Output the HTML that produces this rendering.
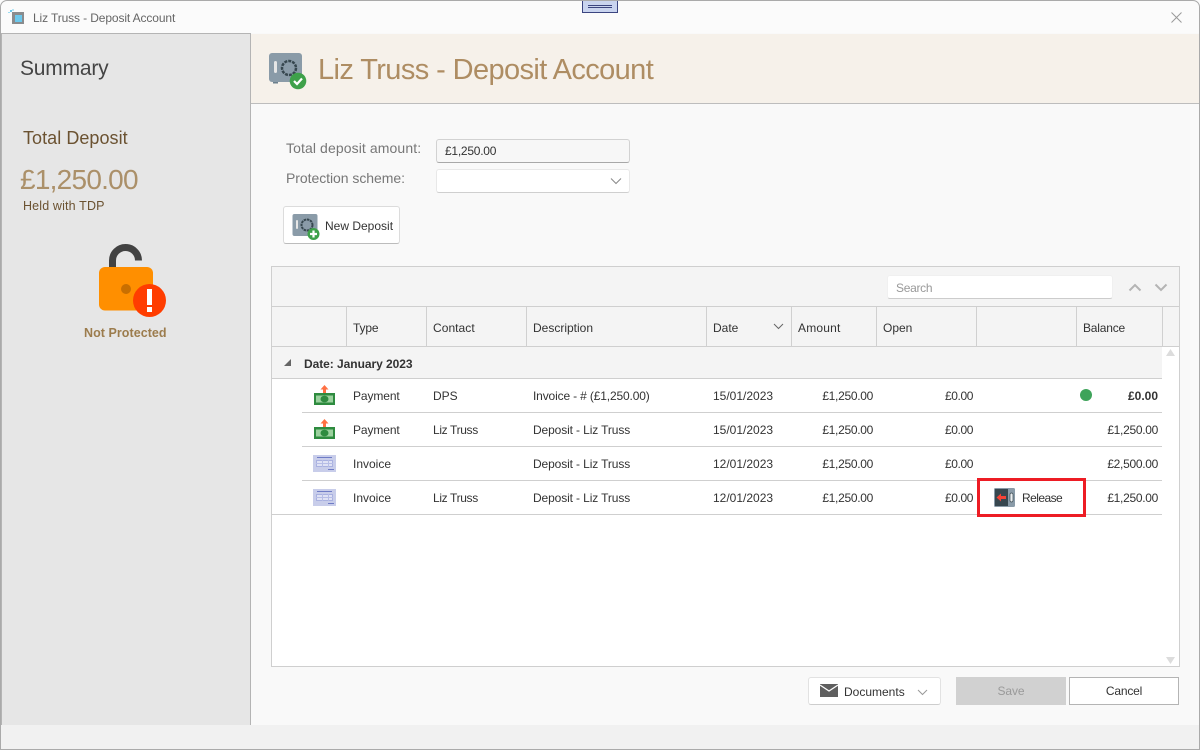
<!DOCTYPE html>
<html><head><meta charset="utf-8">
<style>
html,body{margin:0;padding:0;background:#fff}
#w{position:relative;width:1200px;height:750px;overflow:hidden;background:#f9f9f9;font-family:"Liberation Sans",sans-serif;font-size:12px;color:#333}
#w div{position:absolute;white-space:nowrap;box-sizing:border-box}
.t{line-height:16px;height:16px}
.r{text-align:right}
.m{letter-spacing:-.3px}
.z{letter-spacing:-.4px}
.l{letter-spacing:-.35px}
.d{letter-spacing:-.12px}
.hl{background:#cfcfcf;height:1px}
.vl{background:#d0d0d0;width:1px;top:307px;height:40px}
</style></head><body>
<div id="w">
<!-- frame -->
<div style="left:0;top:0;width:1200px;height:750px;border:1px solid #aaa;border-radius:7px 7px 0 0;z-index:9;pointer-events:none"></div>
<div style="left:0;top:0;width:1200px;height:33px;background:#fbfbfb"></div>
<svg style="position:absolute;left:8px;top:9px" width="18" height="17" viewBox="0 0 18 17"><rect x="4" y="3" width="12" height="12" fill="#8a8c8e"/><rect x="7" y="6" width="7" height="7" fill="#6cc8ec"/><rect x="2" y="1" width="2" height="2" fill="#6cc8ec"/><rect x="0" y="3" width="2" height="1" fill="#9adcf2"/><rect x="4" y="0" width="2" height="2" fill="#b5e5f5"/></svg>
<div class="t" style="left:33px;top:10px;font-size:12px;color:#666;letter-spacing:-.12px">Liz Truss - Deposit Account</div>
<div style="left:582px;top:0;width:36px;height:13px;background:#c9d4ef;border:1px solid #3b4580;border-top:none"></div>
<div style="left:588px;top:5px;width:24px;height:1px;background:#3b4580"></div>
<div style="left:588px;top:7px;width:24px;height:1px;background:#3b4580"></div>
<svg style="position:absolute;left:1171px;top:12px" width="11" height="11" viewBox="0 0 11 11"><path d="M.5 .5L10.500 10.500M10.500 .5L.5 10.500" stroke="#999" stroke-width="1" fill="none"/></svg>

<!-- sidebar -->
<div style="left:1px;top:33px;width:250px;height:692px;background:#e6e6e6;border-left:1px solid #b4b4b4;border-top:1px solid #b4b4b4;border-right:1px solid #b4b4b4"></div>
<div style="left:20px;top:55px;font-size:21px;line-height:27px;color:#444;letter-spacing:-.2px">Summary</div>
<div style="left:23px;top:127px;font-size:18px;line-height:22px;color:#6b5231;letter-spacing:.05px">Total Deposit</div>
<div style="left:20px;top:162px;font-size:28px;line-height:36px;color:#ab9069;letter-spacing:-.75px">£1,250.00</div>
<div class="t" style="left:23px;top:198px;font-size:12.500px;color:#6b5231;letter-spacing:.15px">Held with TDP</div>
<svg style="position:absolute;left:95px;top:240px" width="75" height="80" viewBox="0 0 75 80">
<path d="M17.500 28V20.500A13 13 0 0 1 43.500 20.500" fill="none" stroke="#424242" stroke-width="7"/>
<rect x="4" y="27" width="54" height="43.500" rx="6" fill="#ff8f00"/>
<circle cx="31" cy="49" r="5" fill="#c96f00"/>
<circle cx="54.500" cy="60.500" r="16.500" fill="#ff3d00"/>
<rect x="52" y="49" width="5" height="16" fill="#fff"/><rect x="52" y="67" width="5" height="5" fill="#fff"/>
</svg>
<div class="t" style="left:84px;top:325px;font-size:12.500px;font-weight:bold;color:#9c7c4d;letter-spacing:.05px">Not Protected</div>

<!-- header -->
<div style="left:251px;top:34px;width:948px;height:70px;background:#f6f1ea;border-bottom:1px solid #bdbdbd"></div>
<svg style="position:absolute;left:268px;top:52px" width="40" height="38" viewBox="0 0 40 38">
<rect x="1" y="1" width="33" height="29" rx="3" fill="#8a9ba8"/>
<rect x="5" y="30" width="5" height="1.500" fill="#6b7f8c"/>
<rect x="6" y="9" width="3" height="12" rx="1.500" fill="#e6e6e6"/>
<circle cx="21" cy="16" r="7" fill="none" stroke="#37474f" stroke-width="2.500" stroke-dasharray="3 1"/>
<circle cx="30" cy="29" r="8.300" fill="#3ea14a"/>
<path d="M26 29l3 3 5-5.500" fill="none" stroke="#fff" stroke-width="2.200"/>
</svg>
<div style="left:318px;top:51px;font-size:29px;line-height:38px;color:#ae8d63;letter-spacing:-.6px">Liz Truss - Deposit Account</div>

<!-- form -->
<div class="t" style="left:286px;top:140px;font-size:14px;color:#777;letter-spacing:.1px">Total deposit amount:</div>
<div class="t" style="left:286px;top:170px;font-size:14px;color:#777;letter-spacing:-.05px">Protection scheme:</div>
<div class="t" style="left:436px;top:139px;width:194px;height:24px;background:#f7f7f7;border:1px solid #d2d2d2;border-bottom:1px solid #a8a8a8;border-radius:3px;padding:4px 8px;font-size:12px;line-height:15px;color:#333;letter-spacing:-.25px">£1,250.00</div>
<div style="left:436px;top:169px;width:194px;height:24px;background:#fff;border:1px solid #e8e8e8;border-bottom:1px solid #cfcfcf;border-radius:3px"></div>
<svg style="position:absolute;left:610px;top:177px" width="12" height="8"><path d="M1 1.500L6 6.500L11 1.500" fill="none" stroke="#888" stroke-width="1"/></svg>
<div style="left:283px;top:206px;width:117px;height:38px;background:#fff;border:1px solid #dcdcdc;border-bottom:1px solid #bcbcbc;border-radius:3px"></div>
<svg style="position:absolute;left:291px;top:212px" width="30" height="29" viewBox="0 0 30 29">
<rect x="1.500" y="2" width="25" height="22" rx="2" fill="#8a9ba8"/>
<rect x="5" y="8" width="2" height="9" rx="1" fill="#e6e6e6"/>
<circle cx="16" cy="13" r="5.500" fill="none" stroke="#37474f" stroke-width="2" stroke-dasharray="2.500 .7"/>
<circle cx="22.500" cy="22" r="6" fill="#3ea14a"/>
<path d="M22.500 18.500v7M19 22h7" stroke="#fff" stroke-width="2.200"/>
</svg>
<div class="t" style="left:325px;top:218px;font-size:12px;color:#333">New Deposit</div>

<!-- grid -->
<div style="left:271px;top:266px;width:909px;height:401px;background:#fff;border:1px solid #cfcfcf"></div>
<div style="left:272px;top:267px;width:907px;height:112px;background:#f4f4f4"></div>
<div style="left:1162px;top:347px;width:17px;height:319px;background:#fff"></div>
<div class="hl" style="left:272px;top:306px;width:907px"></div>
<div class="hl" style="left:272px;top:346px;width:907px"></div>
<div class="hl" style="left:272px;top:378px;width:890px"></div>
<div class="hl" style="left:302px;top:412px;width:860px"></div>
<div class="hl" style="left:302px;top:446px;width:860px"></div>
<div class="hl" style="left:302px;top:480px;width:860px"></div>
<div class="hl" style="left:272px;top:514px;width:890px"></div>
<div class="vl" style="left:346px"></div><div class="vl" style="left:426px"></div><div class="vl" style="left:526px"></div><div class="vl" style="left:706px"></div><div class="vl" style="left:791px"></div><div class="vl" style="left:876px"></div><div class="vl" style="left:976px"></div><div class="vl" style="left:1076px"></div><div class="vl" style="left:1162px"></div>

<div style="left:887px;top:275px;width:226px;height:24px;background:#fff;border:1px solid #f0f0f0;border-bottom:1px solid #ccc;border-radius:3px"></div>
<div class="t" style="left:896px;top:280px;color:#999;letter-spacing:-.3px">Search</div>
<svg style="position:absolute;left:1128px;top:283px" width="14" height="9"><path d="M1.500 7.500L7 2L12.500 7.500" fill="none" stroke="#b4b4b4" stroke-width="2"/></svg>
<svg style="position:absolute;left:1154px;top:283px" width="14" height="9"><path d="M1.500 1.500L7 7L12.500 1.500" fill="none" stroke="#b4b4b4" stroke-width="2"/></svg>

<div class="t" style="left:353px;top:320px;letter-spacing:-.15px">Type</div>
<div class="t" style="left:433px;top:320px;letter-spacing:.05px">Contact</div>
<div class="t" style="left:533px;top:320px">Description</div>
<div class="t" style="left:713px;top:320px">Date</div>
<svg style="position:absolute;left:773px;top:323px" width="11" height="7"><path d="M1 1L5.500 5.500L10 1" fill="none" stroke="#666"/></svg>
<div class="t" style="left:798px;top:320px;letter-spacing:.2px">Amount</div>
<div class="t" style="left:883px;top:320px">Open</div>
<div class="t" style="left:1083px;top:320px;letter-spacing:-.2px">Balance</div>
<svg style="position:absolute;left:1165px;top:349px" width="11" height="8"><path d="M5.500 0L10 7H1z" fill="#dcdcdc"/></svg>
<svg style="position:absolute;left:1165px;top:657px" width="11" height="8"><path d="M5.500 7L10 0H1z" fill="#dcdcdc"/></svg>

<svg style="position:absolute;left:283px;top:358px" width="9" height="9"><path d="M8 1V8H1z" fill="#666"/></svg>
<div class="t" style="left:304px;top:356px;font-weight:bold;color:#333;letter-spacing:-.05px">Date: January 2023</div>

<!-- row icons -->
<svg style="position:absolute;left:313px;top:384px" width="23" height="23" viewBox="0 0 23 23"><rect x="1" y="9" width="21" height="12" fill="#2e8b3f"/><rect x="3" y="11.500" width="17" height="7" fill="#9bd19e"/><ellipse cx="11.500" cy="15" rx="4" ry="3.300" fill="#2e8b3f"/><path d="M11.500 1L15.500 5.500H13V9H10V5.500H7.500z" fill="#ff7043"/></svg>
<svg style="position:absolute;left:313px;top:418px" width="23" height="23" viewBox="0 0 23 23"><rect x="1" y="9" width="21" height="12" fill="#2e8b3f"/><rect x="3" y="11.500" width="17" height="7" fill="#9bd19e"/><ellipse cx="11.500" cy="15" rx="4" ry="3.300" fill="#2e8b3f"/><path d="M11.500 1L15.500 5.500H13V9H10V5.500H7.500z" fill="#ff7043"/></svg>
<svg style="position:absolute;left:313px;top:455px" width="23" height="17" viewBox="0 0 23 17"><rect width="23" height="17" fill="#c8cdea"/><rect x="4" y="2" width="15" height="1" fill="#6f7cc6"/><rect x="3.500" y="5.500" width="16" height="6" fill="#dfe2f5" stroke="#a9b1e0"/><path d="M3 8.500H20M9.500 5V12M15.500 5V12" stroke="#b6bde6"/><rect x="15" y="14" width="6" height="1" fill="#6f7cc6"/></svg>
<svg style="position:absolute;left:313px;top:489px" width="23" height="17" viewBox="0 0 23 17"><rect width="23" height="17" fill="#c8cdea"/><rect x="4" y="2" width="15" height="1" fill="#6f7cc6"/><rect x="3.500" y="5.500" width="16" height="6" fill="#dfe2f5" stroke="#a9b1e0"/><path d="M3 8.500H20M9.500 5V12M15.500 5V12" stroke="#b6bde6"/><rect x="15" y="14" width="6" height="1" fill="#6f7cc6"/></svg>

<!-- rows -->
<div class="t" style="left:353px;top:388px;letter-spacing:-.1px">Payment</div><div class="t" style="left:433px;top:388px">DPS</div><div class="t" style="left:533px;top:388px;letter-spacing:-.15px">Invoice - # (£1,250.00)</div><div class="t" style="left:713px;top:388px">15/01/2023</div><div class="t r m" style="left:780px;top:388px;width:93px">£1,250.00</div><div class="t r z" style="left:880px;top:388px;width:93px">£0.00</div><div class="t r" style="left:1065px;top:388px;width:93px;font-weight:bold">£0.00</div>
<div style="left:1080px;top:389px;width:12px;height:12px;border-radius:50%;background:#3ea35a"></div>

<div class="t" style="left:353px;top:422px;letter-spacing:-.1px">Payment</div><div class="t l" style="left:433px;top:422px">Liz Truss</div><div class="t d" style="left:533px;top:422px">Deposit - Liz Truss</div><div class="t" style="left:713px;top:422px">15/01/2023</div><div class="t r m" style="left:780px;top:422px;width:93px">£1,250.00</div><div class="t r z" style="left:880px;top:422px;width:93px">£0.00</div><div class="t r m" style="left:1065px;top:422px;width:93px">£1,250.00</div>

<div class="t" style="left:353px;top:456px">Invoice</div><div class="t d" style="left:533px;top:456px">Deposit - Liz Truss</div><div class="t" style="left:713px;top:456px">12/01/2023</div><div class="t r m" style="left:780px;top:456px;width:93px">£1,250.00</div><div class="t r z" style="left:880px;top:456px;width:93px">£0.00</div><div class="t r m" style="left:1065px;top:456px;width:93px">£2,500.00</div>

<div class="t" style="left:353px;top:490px">Invoice</div><div class="t l" style="left:433px;top:490px">Liz Truss</div><div class="t d" style="left:533px;top:490px">Deposit - Liz Truss</div><div class="t" style="left:713px;top:490px">12/01/2023</div><div class="t r m" style="left:780px;top:490px;width:93px">£1,250.00</div><div class="t r z" style="left:880px;top:490px;width:93px">£0.00</div><div class="t r m" style="left:1065px;top:490px;width:93px">£1,250.00</div>

<div style="left:977px;top:478px;width:109px;height:39px;border:3px solid #ed1c24;z-index:3"></div>
<svg style="position:absolute;left:994px;top:488px" width="22" height="20" viewBox="0 0 22 20"><rect x="0" y="0" width="21" height="19" rx="1.500" fill="#8a9ba8"/><rect x="1" y="1" width="13" height="17" fill="#37474f"/><rect x="16" y="5" width="3" height="9" rx="1.500" fill="#eceff1" stroke="#37474f" stroke-width=".7"/><path d="M2.500 9.500L7 5.500V8H12V11H7V13.500z" fill="#f44336"/></svg>
<div class="t" style="left:1022px;top:490px;letter-spacing:-.55px">Release</div>

<!-- footer -->
<div style="left:808px;top:677px;width:133px;height:28px;background:#fff;border:1px solid #e2e2e2;border-bottom:1px solid #cdcdcd;border-radius:3px"></div>
<svg style="position:absolute;left:820px;top:684px" width="18" height="13" viewBox="0 0 18 13"><rect width="18" height="13" fill="#5f5f5f"/><path d="M0 1L9 7L18 1" fill="none" stroke="#fff" stroke-width="1.200"/></svg>
<div class="t" style="left:844px;top:684px">Documents</div>
<svg style="position:absolute;left:917px;top:689px" width="11" height="7"><path d="M1 1L5.500 5.500L10 1" fill="none" stroke="#999"/></svg>
<div class="t" style="left:956px;top:677px;width:110px;height:28px;background:#d1d1d1;color:#9a9a9a;text-align:center;line-height:28px;letter-spacing:-.1px">Save</div>
<div class="t" style="left:1069px;top:677px;width:110px;height:28px;background:#fff;border:1px solid #b4b4b4;color:#333;text-align:center;line-height:26px;letter-spacing:-.2px">Cancel</div>
<div style="left:1px;top:725px;width:1198px;height:24px;background:#f1f1f1"></div>
</div>
</body></html>
